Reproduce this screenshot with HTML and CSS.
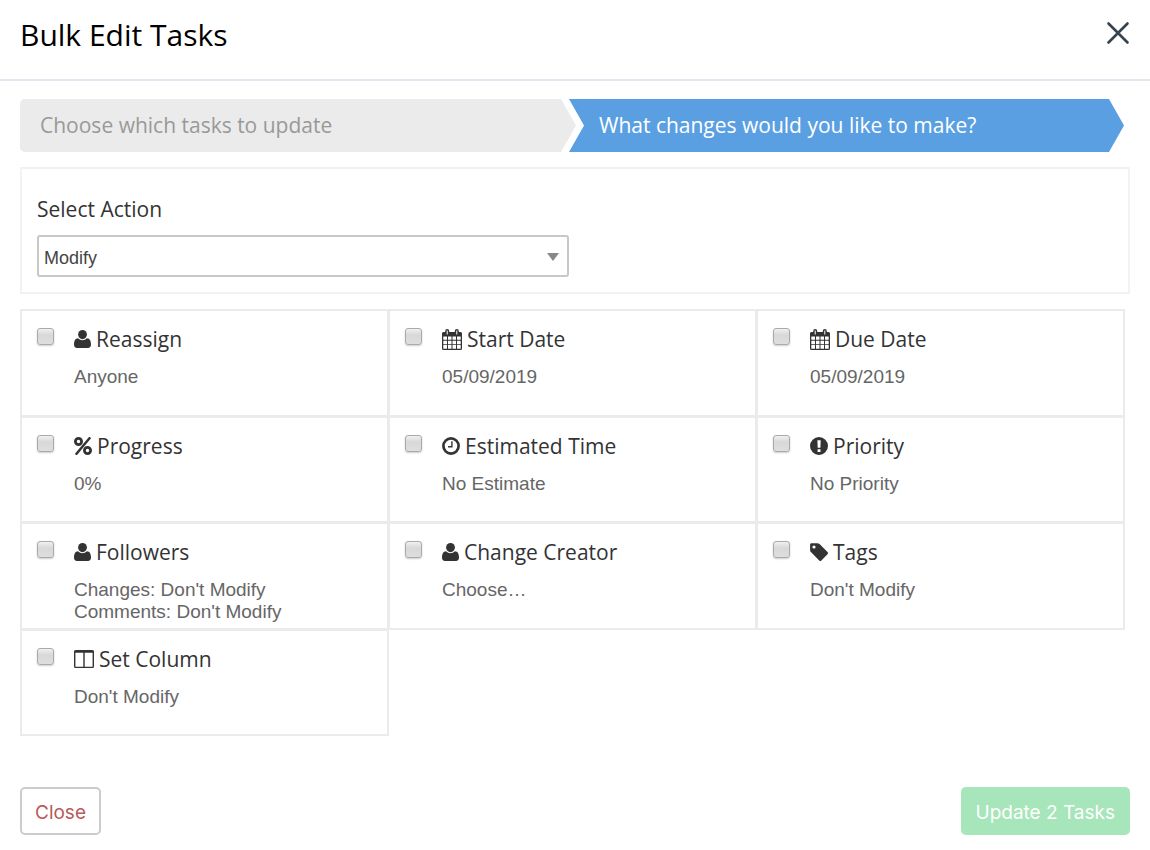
FILE: index.html
```html
<!DOCTYPE html>
<html lang="en">
<head>
    <meta charset="UTF-8">
    <meta name="viewport" content="width=device-width, initial-scale=1.0">
    <title>Bulk Edit Tasks</title>
    <link rel="stylesheet" href="styles.css">
</head>
<body>
    <!-- Shared icons -->
    <svg class="icon-defs" aria-hidden="true">
        <symbol id="icon-user" viewBox="0 0 17 18">
            <ellipse cx="8.500" cy="4.600" rx="4.400" ry="4.600"/>
            <path d="M4.100 8.200C5.300 9.500 6.800 10.200 8.500 10.200s3.200-.7 4.400-2C15.900 8.200 17 11.200 17 14.500c0 2.100-1.200 3.500-3 3.500H3c-1.800 0-3-1.400-3-3.500 0-3.300 1.100-6.300 4.100-6.300z"/>
        </symbol>
        <symbol id="icon-calendar" viewBox="0 0 20 21">
            <path fill-rule="evenodd" d="M1.500 3H3.200V2a2 2 0 0 1 4 0v1h5.600V2a2 2 0 0 1 4 0v1h1.700A1.500 1.500 0 0 1 20 4.500v15a1.500 1.500 0 0 1-1.500 1.500h-17A1.500 1.500 0 0 1 0 19.500v-15A1.500 1.500 0 0 1 1.500 3zM4.700 1.500v4h1v-4zM14.300 1.500v4h1v-4zM1.300 7.500v3.300h3.700V7.500zM6 7.500v3.300h3.500V7.500zM10.500 7.500v3.300H14V7.500zM15 7.500v3.300h3.700V7.500zM1.300 11.700v3.500h3.700v-3.500zM6 11.700v3.500h3.500v-3.500zM10.500 11.700v3.500H14v-3.500zM15 11.700v3.500h3.700v-3.500zM1.300 16.100v3.600h3.700v-3.600zM6 16.100v3.600h3.500v-3.600zM10.500 16.100v3.600H14v-3.600zM15 16.100v3.600h3.700v-3.600z"/>
        </symbol>
        <symbol id="icon-percent" viewBox="0 0 18 18">
            <g fill="none" stroke="currentColor">
                <circle cx="4.500" cy="4.500" r="3.100" stroke-width="2.800"/>
                <circle cx="13.500" cy="13.500" r="3.100" stroke-width="2.800"/>
                <path d="M15.500 1.200L2.500 16.800" stroke-width="2.500" stroke-linecap="round"/>
            </g>
        </symbol>
        <symbol id="icon-clock" viewBox="0 0 18 18">
            <g fill="none" stroke="currentColor">
                <circle cx="9" cy="9" r="7.600" stroke-width="2.700"/>
                <path d="M9.900 4.300v5.500H6" stroke-width="1.400"/>
            </g>
        </symbol>
        <symbol id="icon-exclamation" viewBox="0 0 18 18">
            <path fill-rule="evenodd" d="M9 0a9 9 0 1 0 0 18A9 9 0 0 0 9 0zM7.400 3.200h3.300l-.3 7.500H7.700zM7.600 12.200h2.900v2.700H7.600z"/>
        </symbol>
        <symbol id="icon-tag" viewBox="0 0 18 18">
            <path fill-rule="evenodd" d="M1.500.2h5.600c1 0 2 .4 2.700 1.100l7.700 7.700c.7.700.7 1.500 0 2.200l-6.100 6.200c-.7.700-1.500.7-2.200 0L1.400 9.600C.6 8.900.1 7.800.1 6.900V1.600C.1.800.7.200 1.500.2zM4 2.400a1.600 1.600 0 1 0 0 3.200 1.600 1.600 0 0 0 0-3.200z"/>
        </symbol>
        <symbol id="icon-columns" viewBox="0 0 20 18">
            <path fill-rule="evenodd" d="M1.500 0h17A1.500 1.500 0 0 1 20 1.500v15a1.500 1.500 0 0 1-1.500 1.500h-17A1.500 1.500 0 0 1 0 16.500v-15A1.500 1.500 0 0 1 1.500 0zM1.400 2.700v14h7.900v-14zM10.700 2.700v14h7.900v-14z"/>
        </symbol>
    </svg>

    <div class="modal">
        <header class="modal-header">
            <h1>Bulk Edit Tasks</h1>
            <button type="button" class="dismiss" aria-label="Dismiss">
                <svg viewBox="0 0 24 24"><path d="M2.500 2.500l19 19M21.500 2.500l-19 19"/></svg>
            </button>
        </header>

        <main class="modal-body">
            <div class="steps">
                <div class="step done">Choose which tasks to update</div>
                <div class="step active">What changes would you like to make?</div>
            </div>

            <div class="action-panel">
                <label for="action-select">Select Action</label>
                <div class="select-wrap">
                    <select id="action-select">
                        <option>Modify</option>
                    </select>
                </div>
            </div>

            <div class="fields">
                <div class="field">
                    <input type="checkbox" id="reassign">
                    <div class="field-text">
                        <label for="reassign"><svg class="icon icon-user"><use href="#icon-user"/></svg>Reassign</label>
                        <p>Anyone</p>
                    </div>
                </div>
                <div class="field">
                    <input type="checkbox" id="start-date">
                    <div class="field-text">
                        <label for="start-date"><svg class="icon icon-calendar"><use href="#icon-calendar"/></svg>Start Date</label>
                        <p>05/09/2019</p>
                    </div>
                </div>
                <div class="field">
                    <input type="checkbox" id="due-date">
                    <div class="field-text">
                        <label for="due-date"><svg class="icon icon-calendar"><use href="#icon-calendar"/></svg>Due Date</label>
                        <p>05/09/2019</p>
                    </div>
                </div>
                <div class="field">
                    <input type="checkbox" id="progress">
                    <div class="field-text">
                        <label for="progress"><svg class="icon"><use href="#icon-percent"/></svg>Progress</label>
                        <p>0%</p>
                    </div>
                </div>
                <div class="field">
                    <input type="checkbox" id="estimated-time">
                    <div class="field-text">
                        <label for="estimated-time"><svg class="icon"><use href="#icon-clock"/></svg>Estimated Time</label>
                        <p>No Estimate</p>
                    </div>
                </div>
                <div class="field">
                    <input type="checkbox" id="priority">
                    <div class="field-text">
                        <label for="priority"><svg class="icon"><use href="#icon-exclamation"/></svg>Priority</label>
                        <p>No Priority</p>
                    </div>
                </div>
                <div class="field">
                    <input type="checkbox" id="followers">
                    <div class="field-text">
                        <label for="followers"><svg class="icon icon-user"><use href="#icon-user"/></svg>Followers</label>
                        <p>Changes: Don't Modify<br>Comments: Don't Modify</p>
                    </div>
                </div>
                <div class="field">
                    <input type="checkbox" id="change-creator">
                    <div class="field-text">
                        <label for="change-creator"><svg class="icon icon-user"><use href="#icon-user"/></svg>Change Creator</label>
                        <p>Choose…</p>
                    </div>
                </div>
                <div class="field">
                    <input type="checkbox" id="tags">
                    <div class="field-text">
                        <label for="tags"><svg class="icon"><use href="#icon-tag"/></svg>Tags</label>
                        <p>Don't Modify</p>
                    </div>
                </div>
                <div class="field">
                    <input type="checkbox" id="set-column">
                    <div class="field-text">
                        <label for="set-column"><svg class="icon icon-columns"><use href="#icon-columns"/></svg>Set Column</label>
                        <p>Don't Modify</p>
                    </div>
                </div>
            </div>
        </main>

        <footer class="modal-footer">
            <button type="button" class="btn btn-close">Close</button>
            <button type="button" class="btn btn-update">Update 2 Tasks</button>
        </footer>
    </div>
</body>
</html>
```
FILE: styles.css
```css
* {
    box-sizing: border-box;
}

body {
    margin: 0;
    background-color: #fff;
    color: #333;
    font-family: 'Open Sans', sans-serif;
    font-size: 21px;
}

.icon-defs {
    display: none;
}

.modal-header {
    display: flex;
    justify-content: space-between;
    align-items: flex-start;
    padding: 15px 20px 24px;
    border-bottom: 2px solid #e4e7f0;
}

h1 {
    margin: 0;
    color: #000;
    font-size: 30px;
    font-weight: 400;
    line-height: 40px;
}

.dismiss {
    width: 24px;
    height: 24px;
    margin-top: 6px;
    padding: 0;
    border: none;
    background: none;
    cursor: pointer;
}

.dismiss svg {
    display: block;
    width: 24px;
    height: 24px;
    fill: none;
    stroke: #36434f;
    stroke-width: 2.6;
    stroke-linecap: round;
}

.modal-body {
    padding: 18px 20px 0;
}

.steps {
    display: grid;
    grid-template-columns: 1fr 1fr;
    margin-right: 6px;
}

.step {
    line-height: 53px;
}

/* The two arrows overlap so only a thin chevron shows between them */
.step.done {
    margin-right: -4px;
    padding-left: 20px;
    border-radius: 5px 0 0 5px;
    background-color: #ebebeb;
    color: #999;
    clip-path: polygon(0 0, calc(100% - 15px) 0, 100% 50%, calc(100% - 15px) 100%, 0 100%);
}

.step.active {
    margin-left: -3px;
    padding-left: 30px;
    background-color: #5b9fe3;
    color: #fff;
    clip-path: polygon(0 0, calc(100% - 15px) 0, 100% 50%, calc(100% - 15px) 100%, 0 100%, 15px 50%);
}

.action-panel {
    margin-top: 15px;
    padding: 25px 15px 15px;
    border: 2px solid #f2f2f2;
}

.action-panel label {
    display: block;
    margin-bottom: 11px;
    line-height: 30px;
}

.select-wrap {
    position: relative;
    width: calc(50% - 6px);
}

.select-wrap::after {
    content: '';
    position: absolute;
    top: 18px;
    right: 10px;
    border-top: 8px solid #888;
    border-left: 6px solid transparent;
    border-right: 6px solid transparent;
    pointer-events: none;
}

select {
    display: block;
    width: 100%;
    height: 42px;
    padding: 3px 5px 0;
    border: 2px solid #c8c8c8;
    border-radius: 3px;
    background-color: #fff;
    color: #444;
    font-family: 'Liberation Sans', sans-serif;
    font-size: 18px;
    appearance: none;
}

.fields {
    display: grid;
    grid-template-columns: repeat(3, 1fr);
    grid-auto-rows: minmax(107px, auto) minmax(106px, auto);
    margin: 15px 6px 0 0;
}

.field {
    display: flex;
    align-items: flex-start;
    margin: 0 -1px -1px 0;
    padding: 13px 15px 0;
    border: 2px solid #ebebeb;
}

input[type="checkbox"] {
    width: 17px;
    height: 17px;
    margin: 4px 20px 0 0;
    border: 1px solid #aaa;
    border-radius: 3px;
    background: linear-gradient(#f0f0f0, #d8d8d8 40%, #dedede);
    box-shadow: 0 1px 2px rgba(0, 0, 0, 0.2);
    appearance: none;
}

.field label {
    display: flex;
    align-items: center;
    gap: 5px;
    line-height: 30px;
}

.field p {
    margin: 12px 0 0;
    color: #666;
    font-family: 'Liberation Sans', sans-serif;
    font-size: 19px;
    line-height: 22px;
}

.icon {
    width: 18px;
    height: 18px;
    fill: currentColor;
}

.icon-user {
    width: 17px;
}

.icon-columns {
    width: 20px;
}

.icon-calendar {
    width: 20px;
    height: 21px;
}

.modal-footer {
    display: flex;
    justify-content: space-between;
    padding: 52px 20px 15px;
}

.btn {
    height: 48px;
    padding: 2px 15px 0;
    border: none;
    border-radius: 5px;
    font-family: Inter, sans-serif;
    font-size: 19px;
    cursor: pointer;
}

.btn-close {
    padding: 2px 13px 0;
    border: 2px solid #ccc;
    background-color: #fff;
    color: #bb5a56;
}

.btn-update {
    background-color: #a7e5ba;
    color: #fff;
}
```
